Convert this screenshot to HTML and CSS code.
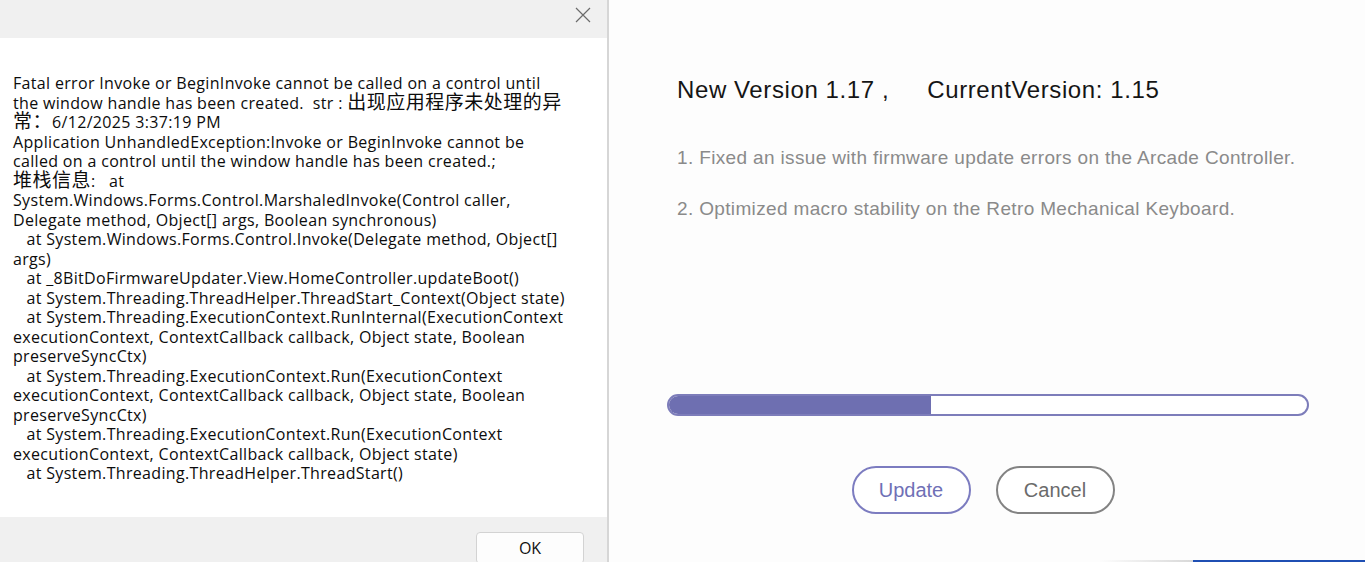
FILE: index.html
```html
<!DOCTYPE html>
<html>
<head>
<meta charset="utf-8">
<link rel="stylesheet" href="styles.css">
</head>
<body>
<div class="dialog">
  <div class="titlebar">
    <svg class="close" width="16" height="16" viewBox="0 0 16 16"><path d="M1 1 L15 15 M15 1 L1 15" stroke="#6b6b6b" stroke-width="1.2" fill="none"/></svg>
  </div>
  <div class="msg">
    <p class="err">Fatal error Invoke or BeginInvoke cannot be called on a control until<br>the window handle has been created.&nbsp; str : <span class="cjk">出现应用程序未处理的异</span><br><span class="cjk">常：</span>6/12/2025 3:37:19 PM<br>Application UnhandledException:Invoke or BeginInvoke cannot be<br>called on a control until the window handle has been created.;<br><span class="cjk">堆栈信息</span>:&nbsp;&nbsp; at<br>System.Windows.Forms.Control.MarshaledInvoke(Control caller,<br>Delegate method, Object[] args, Boolean synchronous)<br>&nbsp;&nbsp; at System.Windows.Forms.Control.Invoke(Delegate method, Object[]<br>args)<br>&nbsp;&nbsp; at _8BitDoFirmwareUpdater.View.HomeController.updateBoot()<br>&nbsp;&nbsp; at System.Threading.ThreadHelper.ThreadStart_Context(Object state)<br>&nbsp;&nbsp; at System.Threading.ExecutionContext.RunInternal(ExecutionContext<br>executionContext, ContextCallback callback, Object state, Boolean<br>preserveSyncCtx)<br>&nbsp;&nbsp; at System.Threading.ExecutionContext.Run(ExecutionContext<br>executionContext, ContextCallback callback, Object state, Boolean<br>preserveSyncCtx)<br>&nbsp;&nbsp; at System.Threading.ExecutionContext.Run(ExecutionContext<br>executionContext, ContextCallback callback, Object state)<br>&nbsp;&nbsp; at System.Threading.ThreadHelper.ThreadStart()</p>
  </div>
  <div class="footer">
    <button class="ok">OK</button>
  </div>
</div>
<div class="divider"></div>
<div class="updater">
  <h1 class="versions"><span>New Version 1.17 ,</span><span class="cur">CurrentVersion: 1.15</span></h1>
  <ol class="notes">
    <li>1. Fixed an issue with firmware update errors on the Arcade Controller.</li>
    <li>2. Optimized macro stability on the Retro Mechanical Keyboard.</li>
  </ol>
  <div class="progress"><div class="fill" style="width:41%"></div></div>
  <div class="actions">
    <button class="pill update">Update</button>
    <button class="pill cancel">Cancel</button>
  </div>
  <div class="edge"><span class="fade"></span><span class="blue"></span></div>
</div>
</body>
</html>
```
FILE: styles.css
```css
html, body {
  margin: 0;
  padding: 0;
  height: 562px;
  overflow: hidden;
}
body {
  display: flex;
  background: #fdfdfd;
  font-family: "Liberation Sans", "Noto Sans CJK SC", sans-serif;
}
.dialog {
  width: 607px;
  display: flex;
  flex-direction: column;
  background: #ffffff;
}
.titlebar {
  height: 38px;
  background: #f0f0f0;
  display: flex;
  justify-content: flex-end;
  align-items: flex-start;
}
.close {
  margin: 7px 16px 0 0;
}
.msg {
  flex: 1;
  padding: 36px 0 0 13px;
}
.err {
  margin: 0;
  font-family: "Open Sans", "Noto Sans CJK SC", sans-serif;
  font-size: 16px;
  line-height: 19.5px;
  color: #0c0c0c;
  letter-spacing: 0.33px;
  white-space: nowrap;
}
.cjk {
  font-family: "Noto Sans CJK SC", sans-serif;
  font-size: 19px;
  line-height: 10px;
  letter-spacing: 0.5px;
}
.footer {
  height: 45px;
  background: #f0f0f0;
  display: flex;
  justify-content: flex-end;
  align-items: flex-start;
}
.ok {
  margin: 15px 23px 0 0;
  width: 108px;
  height: 32px;
  background: #fdfdfd;
  border: 1px solid #d3d3d3;
  border-radius: 4px;
  font-family: "Open Sans", sans-serif;
  font-size: 16px;
  color: #111;
  padding: 0;
}
.divider {
  width: 2px;
  background: #d6d6d6;
}
.updater {
  flex: 1;
  display: flex;
  flex-direction: column;
  background: #fdfdfd;
}
.versions {
  margin: 75px 0 0 68px;
  font-size: 24px;
  letter-spacing: 0.6px;
  font-weight: normal;
  color: #151515;
  line-height: 30px;
}
.cur {
  margin-left: 38px;
}
.notes {
  list-style: none;
  margin: 41px 0 0 68px;
  padding: 0;
  color: #8a8a8a;
  font-size: 19px;
  letter-spacing: 0.35px;
}
.notes li {
  line-height: 24px;
  margin-bottom: 27px;
}
.progress {
  margin: 146px 56px 0 58px;
  height: 22px;
  border: 2px solid #7d7dba;
  border-radius: 13px;
  background: #ffffff;
  box-sizing: border-box;
  overflow: hidden;
}
.fill {
  height: 100%;
  background: #6e6fb1;
}
.actions {
  display: flex;
  justify-content: center;
  gap: 25px;
  margin-top: 50px;
  padding-right: 8px;
}
.pill {
  width: 119px;
  height: 48px;
  border-radius: 24px;
  background: #ffffff;
  font-family: "Liberation Sans", sans-serif;
  font-size: 20px;
  padding: 0;
}
.update {
  border: 2px solid #7c7cc0;
  color: #6f70b6;
}
.cancel {
  border: 2px solid #838383;
  color: #6b6b6b;
}
.edge {
  margin-top: auto;
  height: 2px;
  display: flex;
}
.fade {
  margin-left: 490px;
  width: 94px;
  background: linear-gradient(to right, #fdfdfd, #d8d8d8);
}
.blue {
  flex: 1;
  background: #1f4fb3;
}
```
